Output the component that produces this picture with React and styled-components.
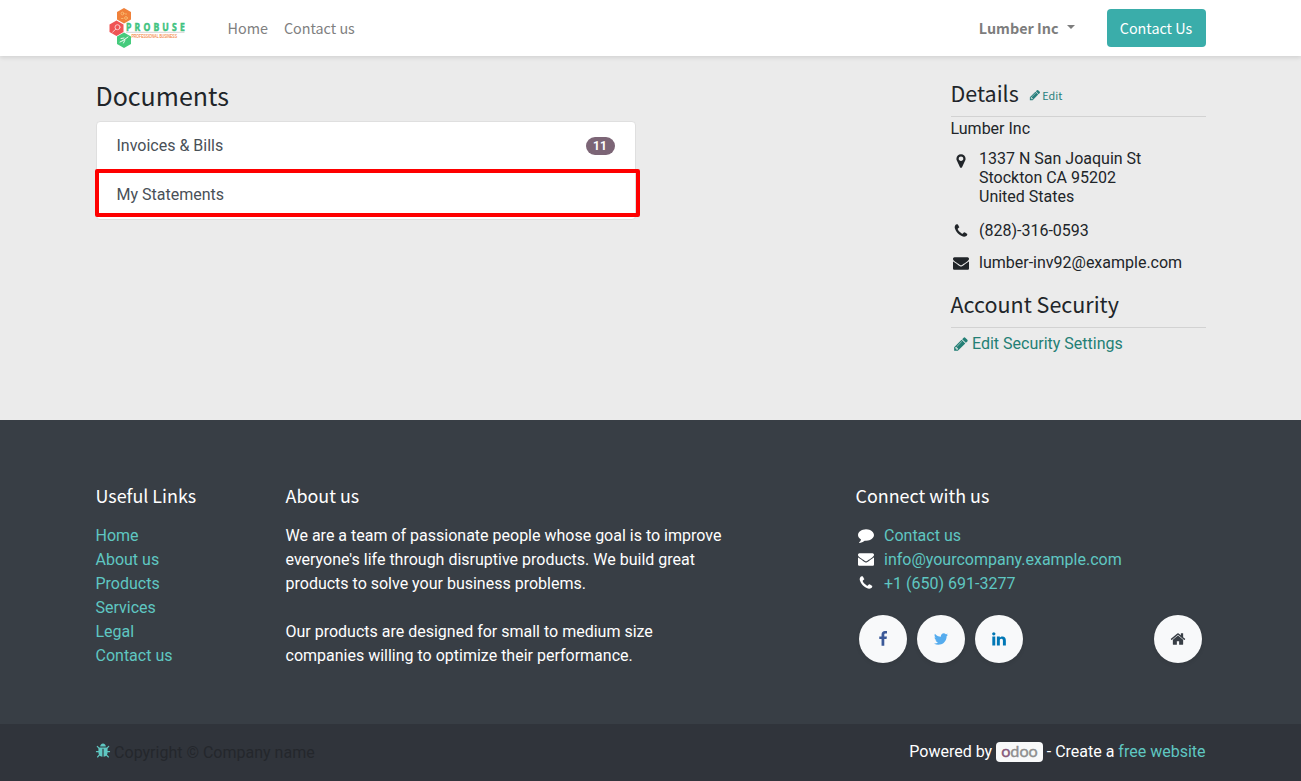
import React from "react";
import styled, { createGlobalStyle } from "styled-components";

const HEAD_FONT = '"Noto Sans CJK SC", "Noto Sans", sans-serif';

const GlobalStyle = createGlobalStyle`
  *, *::before, *::after { box-sizing: border-box; }
  body {
    margin: 0;
    font-family: Roboto, "Noto Sans", sans-serif;
    font-size: 16px;
    line-height: 24px;
    color: #212529;
    background: #ebebeb;
  }
  a { text-decoration: none; color: inherit; }
  ul, p, h3, h4, h5, address { margin: 0; padding: 0; }
  ul { list-style: none; }
`;

const ICONS = {
  pencil: "M491 1536l91-91-235-235-91 91v107h128v128h107zm523-928q0-22-22-22-10 0-17 7l-542 542q-7 7-7 17 0 22 22 22 10 0 17-7l542-542q7-7 7-17zm-54-192l416 416-832 832h-416v-416zm683 96q0 53-37 90l-166 166-416-416 166-165q36-38 90-38 53 0 91 38l235 234q37 39 37 91z",
  marker: "M1152 640q0-106-75-181t-181-75-181 75-75 181 75 181 181 75 181-75 75-181zm256 0q0 109-33 179l-364 774q-16 33-47.5 52t-67.5 19-67.5-19-46.5-52l-365-774q-33-70-33-179 0-212 150-362t362-150 362 150 150 362z",
  phone: "M1600 1240q0 27-10 70.5t-21 68.5q-21 50-122 106-94 51-186 51-27 0-53-3.5t-57.5-12.5-47-14.5-55.5-20.5-49-18q-98-35-175-83-127-79-264-216t-216-264q-48-77-83-175-3-9-18-49t-20.5-55.5-14.5-47-12.5-57.5-3.5-53q0-92 51-186 56-101 106-122 25-11 68.5-21t70.5-10q14 0 21 3 18 6 53 76 11 19 30 54t35 63.5 31 53.5q3 4 17.5 25t21.5 35.5 7 28.5q0 20-28.5 50t-62 55-62 53-28.5 46q0 9 5 22.5t8.5 20.5 14 24 11.5 19q76 137 174 235t235 174q2 1 19 11.5t24 14 20.5 8.5 22.5 5q18 0 46-28.5t53-62 55-62 50-28.5q14 0 28.5 7t35.5 21.5 25 17.5q25 15 53.5 31t63.5 35 54 30q70 35 76 53 3 7 3 21z",
  envelope: "M1792 710v794q0 66-47 113t-113 47h-1472q-66 0-113-47t-47-113v-794q44 49 101 87 362 246 497 345 57 42 92.5 65.5t94.5 48 110 24.5h2q51 0 110-24.5t94.5-48 92.5-65.5q170-123 498-345 57-39 100-87zm0-294q0 79-49 151t-122 123q-376 261-468 325-10 7-42.5 31t-54 38.5-52 32.5-57.5 27-50 9h-2q-23 0-50-9t-57.5-27-52-32.5-54-38.5-42.5-31q-91-64-262-182.5t-205-142.5q-62-42-117-115.5t-55-136.5q0-78 41.5-130t118.5-52h1472q65 0 112.5 47t47.5 113z",
  comment: "M1792 896q0 174-120 321.5t-326 233-450 85.5q-70 0-145-8-198 175-460 242-49 14-114 22-17 2-30.5-9t-17.5-29v-1q-3-4-.5-12t2-10 4.5-9.5l6-9 7-8.5 8-9q7-8 31-34.5t34.5-38 31-39.5 32.5-51 27-59 26-76q-157-89-247.5-220t-90.5-281q0-130 71-248.5t191-204.5 286-136.5 348-50.5q244 0 450 85.5t326 233 120 321.5z",
  facebook: "M1343 12v264h-157q-86 0-116 36t-30 108v189h293l-39 296h-254v759h-306v-759h-255v-296h255v-218q0-186 104-288.5t277-102.5q147 0 228 12z",
  twitter: "M1684 408q-67 98-162 167 1 14 1 42 0 130-38 259.5t-115.5 248.5-184.5 210.5-258 146-323 54.5q-271 0-496-145 35 4 78 4 225 0 401-138-105-2-188-64.5t-114-159.5q33 5 61 5 43 0 85-11-112-23-185.5-111.5t-73.5-205.5v-4q68 38 146 41-66-44-105-115t-39-154q0-88 44-163 121 149 294.5 238.5t371.5 99.5q-8-38-8-74 0-134 94.5-228.5t228.5-94.5q140 0 236 102 109-21 205-78-37 115-142 178 93-10 186-50z",
  linkedin: "M477 625v991h-330v-991h330zm21-306q1 73-50.5 122t-135.5 49h-2q-82 0-132-49t-50-122q0-74 51.5-122.5t134.5-48.5 133 48.5 51 122.5zm1166 729v568h-329v-530q0-105-40.5-164.5t-126.5-59.5q-63 0-105.5 34.5t-63.5 85.5q-11 30-11 81v553h-329q2-399 2-647t-1-296l-1-48h329v144h-2q20-32 41-56t56.5-52 87-43.5 114.5-15.5q171 0 275 113.5t104 332.5z",
  home: "M1472 992v480q0 26-19 45t-45 19h-384v-384h-256v384h-384q-26 0-45-19t-19-45v-480q0-1 .5-3t.5-3l575-474 575 474q1 2 1 6zm223-69l-62 74q-8 9-21 11h-3q-13 0-21-7l-692-577-692 577q-12 8-24 7-13-2-21-11l-62-74q-8-10-7-23.5t11-21.5l719-599q32-26 76-26t76 26l244 204v-195q0-14 9-23t23-9h192q14 0 23 9t9 23v408l219 182q10 8 11 21.5t-7 23.5z",
  bug: "M1696 960q0 26-19 45t-45 19h-224q0 171-67 290l208 209q19 19 19 45t-19 45q-18 19-45 19t-45-19l-198-197q-5 5-15 13t-42 28.5-65 36.5-82 29-97 13v-896h-128v896q-51 0-101.5-13.5t-87-33-66-39-43.5-32.5l-15-14-183 207q-20 21-48 21-24 0-43-16-19-18-20.5-44.5t15.5-46.5l202-227q-58-114-58-274h-224q-26 0-45-19t-19-45 19-45 45-19h224v-294l-173-173q-19-19-19-45t19-45 45-19 45 19l173 173h844l173-173q19-19 45-19t45 19 19 45-19 45l-173 173v294h224q26 0 45 19t19 45zm-480-576h-640q0-133 93.5-226.5t226.5-93.5 226.5 93.5 93.5 226.5z",
};

const IconSvg = styled.svg`
  display: block;
  flex: none;
  width: ${(p) => p.$size}px;
  height: ${(p) => p.$size}px;
  fill: currentColor;
`;

function Icon({ name, size = 16 }) {
  return (
    <IconSvg $size={size} viewBox="0 0 1792 1792" aria-hidden="true">
      <path d={ICONS[name]} />
    </IconSvg>
  );
}

const Page = styled.div`
  height: 781px;
  display: flex;
  flex-direction: column;
  overflow: hidden;
`;

const Container = styled.div`
  width: 1110px;
  margin: 0 auto;
`;

/* Header */
const Header = styled.header`
  height: 56px;
  flex: none;
  background: #fff;
  box-shadow: 0 2px 4px rgba(0, 0, 0, 0.1);
  z-index: 1;
`;

const HeaderRow = styled(Container)`
  height: 56px;
  display: flex;
  align-items: center;
  font-family: ${HEAD_FONT};
`;

const Logo = styled.svg`
  width: 96px;
  height: 48px;
  display: block;
`;

const NavLink = styled.a`
  font-size: 14.35px;
  line-height: 24px;
  color: #808080;
  margin-left: ${(p) => p.$gap}px;
`;

const UserMenu = styled.a`
  display: flex;
  align-items: center;
  gap: 8px;
  margin-left: auto;
  font-size: 14.35px;
  font-weight: 700;
  color: #7d7d7d;
`;

const Caret = styled.span`
  border: 4.8px solid transparent;
  border-top-color: #7d7d7d;
  border-bottom: 0;
  margin-bottom: 2px;
`;

const ContactButton = styled.a`
  display: flex;
  align-items: center;
  justify-content: center;
  width: 99px;
  height: 38px;
  margin-left: 32px;
  border-radius: 4px;
  background: #3aadaa;
  color: #fff;
  font-size: 14.35px;
`;

/* Main */
const Main = styled.main`
  height: 364px;
  flex: none;
`;

const MainRow = styled(Container)`
  display: flex;
  justify-content: space-between;
`;

const Documents = styled.section`
  width: 540px;
  padding-top: 22px;
`;

const Aside = styled.aside`
  width: 255px;
  padding-top: 23px;
`;

const DocTitle = styled.h3`
  font: 400 25px/34px ${HEAD_FONT};
  margin-bottom: 9px;
`;

const DocList = styled.div`
  background: #fff;
  border: 1px solid #dfdfdf;
  border-radius: 4px;
`;

const DocItem = styled.a`
  position: relative;
  display: flex;
  justify-content: space-between;
  align-items: center;
  height: 48px;
  padding: 0 20px;
  color: #495057;
  & + & { height: 49px; border-top: 1px solid #dfdfdf; }
`;

const Highlight = styled.span`
  position: absolute;
  inset: -2px -5px 2px -2px;
  border: 4px solid #fe0000;
  border-radius: 2px;
`;

const Badge = styled.span`
  width: 29px;
  height: 18px;
  border-radius: 9px;
  background: #7c6576;
  color: #fff;
  font-size: 12px;
  font-weight: 700;
  line-height: 18px;
  text-align: center;
`;

const AsideTitle = styled.h4`
  display: flex;
  align-items: center;
  height: 38px;
  font: 400 21.5px/28px ${HEAD_FONT};
  padding-bottom: 9px;
  border-bottom: 1px solid #d2d2d2;
`;

const EditLink = styled.a`
  display: flex;
  align-items: center;
  gap: 1.5px;
  margin: 3px 0 0 10px;
  font-size: 10.8px;
  color: #287f7d;
`;

const PartnerName = styled.p`
  line-height: 24px;
`;

const InfoRow = styled.div`
  display: flex;
  align-items: flex-start;
  gap: 8px;
  margin-top: ${(p) => p.$top}px;
  line-height: 19px;
`;

const Address = styled.address`
  font-style: normal;
`;

const IconSlot = styled.span`
  display: flex;
  flex: none;
  justify-content: center;
  width: 20.5px;
  padding: ${(p) => p.$drop || 0}px ${(p) => p.$nudge || 0}px 0 0;
`;

const SecurityBlock = styled.div`
  margin-top: 18px;
`;

const SecurityLink = styled.a`
  display: flex;
  align-items: center;
  height: 24px;
  margin-top: 4px;
  gap: 1px;
  color: #237f75;
`;

/* Footer */
const Footer = styled.footer`
  height: 304px;
  flex: none;
  background: #383e45;
  color: #fff;
  padding-top: 63px;
`;

const FooterGrid = styled(Container)`
  display: grid;
  grid-template-columns: 190px 570px 350px;
`;

const FooterTitle = styled.h5`
  font: 400 17.9px/24px ${HEAD_FONT};
  margin-bottom: 17px;
`;

const FooterLink = styled.a`
  color: #5fc7c2;
`;

const AboutText = styled.p`
  width: 445px;
  margin-bottom: 24px;
`;

const ContactRow = styled.li`
  display: flex;
  gap: 8px;
  height: 24px;
`;

const SocialRow = styled.div`
  display: flex;
  gap: 10px;
  margin-top: 19px;
  padding: 0 4px 0 3.5px;
`;

const RoundButton = styled.a`
  display: flex;
  align-items: center;
  justify-content: center;
  width: 48px;
  height: 48px;
  border-radius: 50%;
  background: #f8f9fa;
  color: ${(p) => p.$color};
  box-shadow: 0 2px 4px rgba(0, 0, 0, 0.08);
  &:last-child { margin-left: auto; }
`;

const BottomBar = styled.div`
  height: 57px;
  flex: none;
  background: #30343b;
`;

const BottomRow = styled(Container)`
  display: flex;
  align-items: center;
  justify-content: space-between;
  height: 55px;
`;

const Copyright = styled.div`
  display: flex;
  align-items: center;
  gap: 3.6px;
  margin-left: -1px;
  color: #24272c;
`;

const Bug = styled.span`
  color: #5fc7c2;
  padding-bottom: 1px;
`;

const CopyText = styled.span`
  padding-top: 2px;
`;

const Powered = styled.div`
  display: flex;
  align-items: center;
  gap: 3.8px;
  color: #fff;
`;

const OdooMark = styled.span`
  display: flex;
  align-items: center;
  justify-content: center;
  width: 47px;
  height: 20px;
  border-radius: 4px;
  background: #f8f9fa;
  color: #8f8f8f;
  font: 400 16.2px/18px Lato, sans-serif;
  -webkit-text-stroke: 0.4px currentColor;
  padding-bottom: 1px;
`;

const OdooInitial = styled.span`
  color: #875a7b;
`;

const links = ["Home", "About us", "Products", "Services", "Legal", "Contact us"];

function ProbuseLogo() {
  return (
    <Logo viewBox="0 0 96 48" role="img" aria-label="Probuse">
      <polygon points="28,4 35,8 35,15.500 28,19.500 21,15.500 21,8" fill="#f0813a" />
      <polygon points="20.500,16.500 27.500,20.500 27.500,28 20.500,32 13.500,28 13.500,20.500" fill="#ef5455" />
      <polygon points="28,28.500 35,32.500 35,40 28,44 21,40 21,32.500" fill="#45cb7c" />
      <g fill="none" strokeWidth="0.9" strokeLinecap="round">
        <g stroke="#f9bb72"><circle cx="26.500" cy="9.500" r="1.400" /><circle cx="30" cy="14" r="1.400" /><path d="M25.500 14.500h1.500M30 9.500v1" /></g>
        <g stroke="#fbd5d5"><circle cx="21.500" cy="23.200" r="2.500" /><path d="M19.700 25.200l-3 2.800" /></g>
        <g stroke="#fff"><path d="M24 38l3-1.500M27 36.500l5-3.500M25 34.500l3-.5M27.500 39l1.500-3" /></g>
      </g>
      <text x="30" y="26.900" fontFamily="Open Sans, sans-serif" fontWeight="700" fontSize="10.800" transform="translate(30 0) scale(.8 1) translate(-30 0)" textLength="73.500" fill="#3fc380" stroke="#3fc380" strokeWidth=".5">PROBUSE</text>
      <path d="M30 28.300h58.500" stroke="#c9cccb" strokeWidth=".8" />
      <text x="35.500" y="33.800" fontFamily="Liberation Sans, sans-serif" fontSize="4.600" textLength="45.500" lengthAdjust="spacingAndGlyphs" fill="#f58a48" stroke="#f58a48" strokeWidth=".12">PROFESSIONAL BUSINESS</text>
    </Logo>
  );
}

export default function App() {
  return (
    <Page>
      <GlobalStyle />
      <Header>
        <HeaderRow>
          <ProbuseLogo />
          <NavLink $gap={36} href="#">Home</NavLink>
          <NavLink $gap={16} href="#">Contact us</NavLink>
          <UserMenu href="#">Lumber Inc<Caret /></UserMenu>
          <ContactButton href="#">Contact Us</ContactButton>
        </HeaderRow>
      </Header>

      <Main>
        <MainRow>
          <Documents>
            <DocTitle>Documents</DocTitle>
            <DocList>
              <DocItem href="#">Invoices &amp; Bills<Badge>11</Badge></DocItem>
              <DocItem href="#">My Statements<Highlight /></DocItem>
            </DocList>
          </Documents>
          <Aside>
            <AsideTitle>Details<EditLink href="#"><Icon name="pencil" size={12} />Edit</EditLink></AsideTitle>
            <PartnerName>Lumber Inc</PartnerName>
            <InfoRow $top={8}>
              <IconSlot $drop={4}><Icon name="marker" /></IconSlot>
              <Address>1337 N San Joaquin St<br />Stockton CA 95202<br />United States</Address>
            </InfoRow>
            <InfoRow $top={15}>
              <IconSlot $drop={2} $nudge={0.5}><Icon name="phone" /></IconSlot>(828)-316-0593
            </InfoRow>
            <InfoRow $top={13}>
              <IconSlot $drop={2} $nudge={0.5}><Icon name="envelope" /></IconSlot>lumber-inv92@example.com
            </InfoRow>
            <SecurityBlock>
              <AsideTitle>Account Security</AsideTitle>
              <SecurityLink href="#"><IconSlot><Icon name="pencil" /></IconSlot>Edit Security Settings</SecurityLink>
            </SecurityBlock>
          </Aside>
        </MainRow>
      </Main>

      <Footer>
        <FooterGrid>
          <section>
            <FooterTitle>Useful Links</FooterTitle>
            <ul>{links.map((l) => <li key={l}><FooterLink href="#">{l}</FooterLink></li>)}</ul>
          </section>
          <section>
            <FooterTitle>About us</FooterTitle>
            <AboutText>We are a team of passionate people whose goal is to improve everyone's life through disruptive products. We build great products to solve your business problems.</AboutText>
            <AboutText>Our products are designed for small to medium size companies willing to optimize their performance.</AboutText>
          </section>
          <section>
            <FooterTitle>Connect with us</FooterTitle>
            <ul>
              <ContactRow><IconSlot $drop={3} $nudge={0.5}><Icon name="comment" /></IconSlot><FooterLink href="#">Contact us</FooterLink></ContactRow>
              <ContactRow><IconSlot $drop={3} $nudge={0.5}><Icon name="envelope" /></IconSlot><FooterLink href="#">info@yourcompany.example.com</FooterLink></ContactRow>
              <ContactRow><IconSlot $drop={3} $nudge={0.5}><Icon name="phone" /></IconSlot><FooterLink href="#">+1 (650) 691-3277</FooterLink></ContactRow>
            </ul>
            <SocialRow>
              <RoundButton $color="#3b5998" href="#"><Icon name="facebook" /></RoundButton>
              <RoundButton $color="#55acee" href="#"><Icon name="twitter" /></RoundButton>
              <RoundButton $color="#0077b5" href="#"><Icon name="linkedin" /></RoundButton>
              <RoundButton $color="#383e45" href="#"><Icon name="home" /></RoundButton>
            </SocialRow>
          </section>
        </FooterGrid>
      </Footer>

      <BottomBar>
        <BottomRow>
          <Copyright><Bug><Icon name="bug" /></Bug><CopyText>Copyright © Company name</CopyText></Copyright>
          <Powered>
            <span>Powered by</span>
            <OdooMark><OdooInitial>o</OdooInitial>doo</OdooMark>
            <span>- Create a <FooterLink href="#">free website</FooterLink></span>
          </Powered>
        </BottomRow>
      </BottomBar>
    </Page>
  );
}
